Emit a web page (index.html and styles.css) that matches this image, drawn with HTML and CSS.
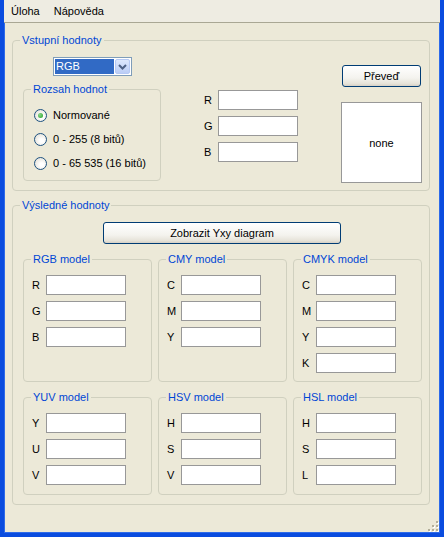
FILE: index.html
```html
<!DOCTYPE html>
<html lang="cs">
<head>
<meta charset="utf-8">
<title>Převod barev</title>
<link rel="stylesheet" href="styles.css">
</head>
<body>
<div class="window">
  <div class="menubar">
    <span class="menu-item">Úloha</span>
    <span class="menu-item">Nápověda</span>
  </div>
  <div class="client">
    <div class="group g-input">
      <div class="legend">Vstupní hodnoty</div>
      <div class="input-body">
        <div class="col-a">
          <div class="combo">
            <span class="combo-value">RGB</span>
            <span class="combo-btn">
              <svg width="9" height="6" viewBox="0 0 9 6"><path d="M1 1 L4.5 4.5 L8 1" fill="none" stroke="#4D6185" stroke-width="2"/></svg>
            </span>
          </div>
          <div class="group g-range">
            <div class="legend">Rozsah hodnot</div>
            <div class="radios">
              <div class="radio-row"><span class="radio checked"></span><span class="radio-label">Normované</span></div>
              <div class="radio-row"><span class="radio"></span><span class="radio-label">0 - 255 (8 bitů)</span></div>
              <div class="radio-row"><span class="radio"></span><span class="radio-label">0 - 65 535 (16 bitů)</span></div>
            </div>
          </div>
        </div>
        <div class="col-b fields">
          <div class="field-row"><span class="lbl">R</span><span class="textbox"></span></div>
          <div class="field-row"><span class="lbl">G</span><span class="textbox"></span></div>
          <div class="field-row"><span class="lbl">B</span><span class="textbox"></span></div>
        </div>
        <div class="col-c">
          <button class="btn btn-convert">Převeď</button>
          <div class="preview">none</div>
        </div>
      </div>
    </div>

    <div class="group g-output">
      <div class="legend">Výsledné hodnoty</div>
      <button class="btn btn-diagram">Zobrazit Yxy diagram</button>
      <div class="models">
        <div class="group g-model">
          <div class="legend">RGB model</div>
          <div class="fields">
            <div class="field-row"><span class="lbl">R</span><span class="textbox"></span></div>
            <div class="field-row"><span class="lbl">G</span><span class="textbox"></span></div>
            <div class="field-row"><span class="lbl">B</span><span class="textbox"></span></div>
          </div>
        </div>
        <div class="group g-model">
          <div class="legend">CMY model</div>
          <div class="fields">
            <div class="field-row"><span class="lbl">C</span><span class="textbox"></span></div>
            <div class="field-row"><span class="lbl">M</span><span class="textbox"></span></div>
            <div class="field-row"><span class="lbl">Y</span><span class="textbox"></span></div>
          </div>
        </div>
        <div class="group g-model">
          <div class="legend">CMYK model</div>
          <div class="fields">
            <div class="field-row"><span class="lbl">C</span><span class="textbox"></span></div>
            <div class="field-row"><span class="lbl">M</span><span class="textbox"></span></div>
            <div class="field-row"><span class="lbl">Y</span><span class="textbox"></span></div>
            <div class="field-row"><span class="lbl">K</span><span class="textbox"></span></div>
          </div>
        </div>
        <div class="group g-model">
          <div class="legend">YUV model</div>
          <div class="fields">
            <div class="field-row"><span class="lbl">Y</span><span class="textbox"></span></div>
            <div class="field-row"><span class="lbl">U</span><span class="textbox"></span></div>
            <div class="field-row"><span class="lbl">V</span><span class="textbox"></span></div>
          </div>
        </div>
        <div class="group g-model">
          <div class="legend">HSV model</div>
          <div class="fields">
            <div class="field-row"><span class="lbl">H</span><span class="textbox"></span></div>
            <div class="field-row"><span class="lbl">S</span><span class="textbox"></span></div>
            <div class="field-row"><span class="lbl">V</span><span class="textbox"></span></div>
          </div>
        </div>
        <div class="group g-model">
          <div class="legend">HSL model</div>
          <div class="fields">
            <div class="field-row"><span class="lbl">H</span><span class="textbox"></span></div>
            <div class="field-row"><span class="lbl">S</span><span class="textbox"></span></div>
            <div class="field-row"><span class="lbl">L</span><span class="textbox"></span></div>
          </div>
        </div>
      </div>
    </div>
  </div>
  <svg class="grip" width="12" height="12" viewBox="0 0 12 12">
    <g fill="#FFFFFF">
      <rect x="10" y="2" width="2" height="2"/>
      <rect x="6" y="6" width="2" height="2"/><rect x="10" y="6" width="2" height="2"/>
      <rect x="2" y="10" width="2" height="2"/><rect x="6" y="10" width="2" height="2"/><rect x="10" y="10" width="2" height="2"/>
    </g>
    <g fill="#B3AE99">
      <rect x="9" y="1" width="2" height="2"/>
      <rect x="5" y="5" width="2" height="2"/><rect x="9" y="5" width="2" height="2"/>
      <rect x="1" y="9" width="2" height="2"/><rect x="5" y="9" width="2" height="2"/><rect x="9" y="9" width="2" height="2"/>
    </g>
  </svg>
</div>
</body>
</html>
```

FILE: styles.css
```css
* { box-sizing: border-box; }

html, body {
  margin: 0;
  padding: 0;
  background: #ECE9D8;
}

body {
  font-family: "Liberation Sans", Arial, sans-serif;
  font-size: 11px;
  color: #000;
}

.window {
  position: relative;
  width: 444px;
  height: 537px;
  background: #ECE9D8;
  border-left: 4px solid #0A4CDF;
  border-right: 4px solid #0A4CDF;
  border-bottom: 4px solid #0A4CDF;
  box-shadow: inset 1px 0 0 #2E6BEA, inset -1px 0 0 #2E6BEA, inset 0 -1px 0 #2E6BEA;
}

.menubar {
  display: flex;
  height: 23px;
  background: #EEECE2;
  border-bottom: 1px solid #A9A794;
  line-height: 22px;
  padding-top: 1px;
}

.menu-item {
  padding: 0 7px;
  line-height: 21px;
}

.client {
  display: flex;
  flex-direction: column;
}

/* group boxes */
.group {
  border: 1px solid #D0D0BF;
  border-radius: 4px;
}

.legend {
  width: fit-content;
  margin: -7px 0 0 7px;
  padding: 0 2px;
  line-height: 13px;
  height: 13px;
  color: #0046D5;
  background: #ECE9D8;
}

.g-input {
  margin: 17px 0 0 8px;
  width: 418px;
}

.input-body {
  display: flex;
  align-items: flex-start;
  height: 143px;
}

.col-a {
  width: 148px;
  display: flex;
  flex-direction: column;
}

.combo {
  margin: 10px 0 0 40px;
  width: 79px;
  height: 19px;
  border: 1px solid #7F9DB9;
  background: #fff;
  padding: 1px;
  display: flex;
}

.combo-value {
  flex: 1;
  background: #316AC5;
  color: #fff;
  line-height: 15px;
  padding-left: 1px;
}

.combo-btn {
  width: 15px;
  margin-left: 1px;
  border: 1px solid #B6C9F4;
  border-radius: 2px;
  background: linear-gradient(#DDE8FD, #BBCDF5);
  display: flex;
  align-items: center;
  justify-content: center;
}

.g-range {
  margin: 13px 0 0 10px;
  width: 138px;
  height: 92px;
}

.radios {
  padding: 7px 0 0 10px;
  display: flex;
  flex-direction: column;
}

.radio-row {
  height: 24px;
  display: flex;
  align-items: center;
}

.radio {
  width: 13px;
  height: 13px;
  border-radius: 50%;
  border: 1px solid #1C5180;
  background: radial-gradient(circle at 60% 60%, #FFFFFF 20%, #DCD9CD 100%);
  display: flex;
  align-items: center;
  justify-content: center;
}

.radio.checked::after {
  content: "";
  width: 5px;
  height: 5px;
  border-radius: 50%;
  background: radial-gradient(circle at 35% 35%, #8CD68C, #21A121);
}

.radio-label {
  margin-left: 6px;
}

.fields {
  display: flex;
  flex-direction: column;
  gap: 6px;
}

.field-row {
  display: flex;
  align-items: center;
  height: 20px;
}

.lbl {
  width: 14px;
}

.textbox {
  width: 80px;
  height: 20px;
  background: #fff;
  border: 1px solid #989898;
}

.col-b {
  margin-left: 43px;
  padding-top: 43px;
}

.col-c {
  margin-left: 43px;
  display: flex;
  flex-direction: column;
}

.btn {
  font-family: "Liberation Sans", Arial, sans-serif;
  font-size: 11px;
  color: #000;
  border: 1px solid #003C74;
  border-radius: 3px;
  background: linear-gradient(#FFFFFF 0%, #F4F3EE 60%, #E6E3D9 88%, #D6D0C5 100%);
  padding: 0;
  height: 22px;
}

.btn-convert {
  margin: 18px 0 0 1px;
  width: 79px;
}

.preview {
  margin-top: 15px;
  width: 81px;
  height: 81px;
  background: #fff;
  border: 1px solid #989898;
  display: flex;
  align-items: center;
  justify-content: center;
}

.g-output {
  margin: 14px 0 0 8px;
  width: 418px;
  padding-bottom: 9px;
}

.btn-diagram {
  display: block;
  margin: 10px 0 0 90px;
  width: 238px;
}

.models {
  margin: 15px 0 0 10px;
  display: grid;
  grid-template-columns: repeat(3, 129px);
  grid-template-rows: 123px 98px;
  column-gap: 6px;
  row-gap: 15px;
}

.g-model .fields {
  padding: 9px 0 0 8px;
}

.grip {
  position: absolute;
  right: 1px;
  bottom: 1px;
}
```
